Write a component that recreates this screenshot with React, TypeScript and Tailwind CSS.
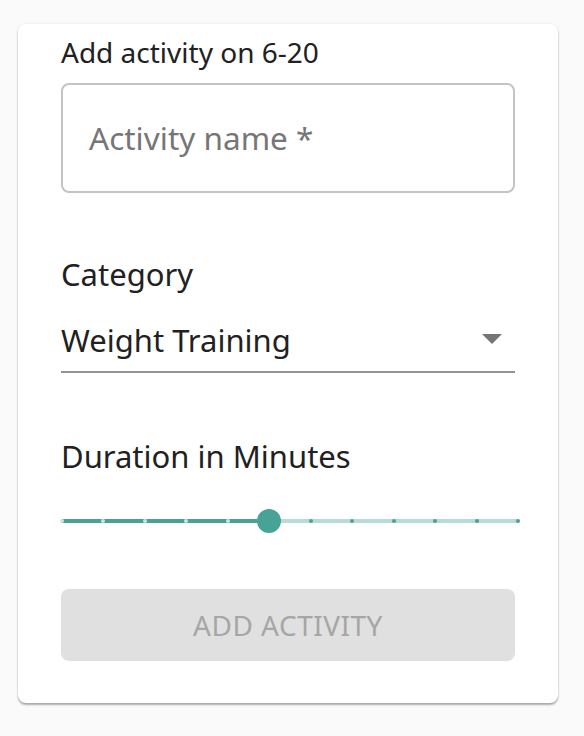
import React from 'react';

const ticks = Array.from({ length: 12 }, (_, i) => i);
const value = 5;

const DurationSlider: React.FC = () => {
  const pct = (value / 11) * 100;
  return (
    <div className="relative h-[48px] mr-[-4px] flex items-center">
      {/* track */}
      <div className="flex w-full h-[4px] rounded-full overflow-hidden">
        <div className="flex-[5] bg-[#48a397]" />
        <div className="flex-[6] bg-[#b7dcd8]" />
      </div>
      {/* marks */}
      <div className="absolute inset-0 flex items-center justify-between mx-[-1px]">
        {ticks.map((i) => (
          <span
            key={i}
            className={
              i < value
                ? 'w-[4px] h-[4px] rounded-full bg-[#c9e6e2]'
                : 'w-[4px] h-[4px] rounded-full bg-[#48a397]'
            }
          />
        ))}
      </div>
      {/* thumb */}
      <div
        className="absolute w-[24px] h-[24px] -ml-[12px] rounded-full bg-[#48a397]"
        style={{ left: `${pct}%` }}
      />
    </div>
  );
};

export default function App() {
  return (
    <div className="min-h-screen bg-[#fafafa] pt-[24px] px-[18px] font-['Noto_Sans',sans-serif] text-[#212121]">
      <div className="w-[540px] bg-white rounded-lg shadow-[0_2px_2px_rgba(0,0,0,0.3),0_0_3px_rgba(0,0,0,0.08)] pt-[8px] pb-[42px] px-[43px]">
        <h2 className="text-[28px] leading-[40px] font-normal">Add activity on 6-20</h2>

        <div className="mt-[11px] h-[110px] border-2 border-[#c4c4c4] rounded-[8px] flex items-center px-[26px]">
          <span className="text-[31.5px] leading-[44px] text-[#767676]">Activity name *</span>
        </div>

        <div className="mt-[59px] text-[31px] leading-[44px]">Category</div>
        <div className="mt-[22px] flex items-center justify-between border-b-2 border-[#949494] pb-[9px]">
          <span className="text-[31px] leading-[44px]">Weight Training</span>
          <svg width="20" height="10" viewBox="0 0 20 10" className="mr-[13px] mt-[-3px]">
            <path d="M0 0 L10 10 L20 0 Z" fill="#757575" />
          </svg>
        </div>

        <div className="mt-[61px] text-[31px] leading-[44px]">Duration in Minutes</div>
        <div className="mt-[19px]">
          <DurationSlider />
        </div>

        <button
          disabled
          className="mt-[44px] w-full h-[72px] rounded-[8px] bg-[#e0e0e0] text-[#a6a6a6] text-[28px] tracking-[0.5px] uppercase"
        >
          Add Activity
        </button>
      </div>
    </div>
  );
}
